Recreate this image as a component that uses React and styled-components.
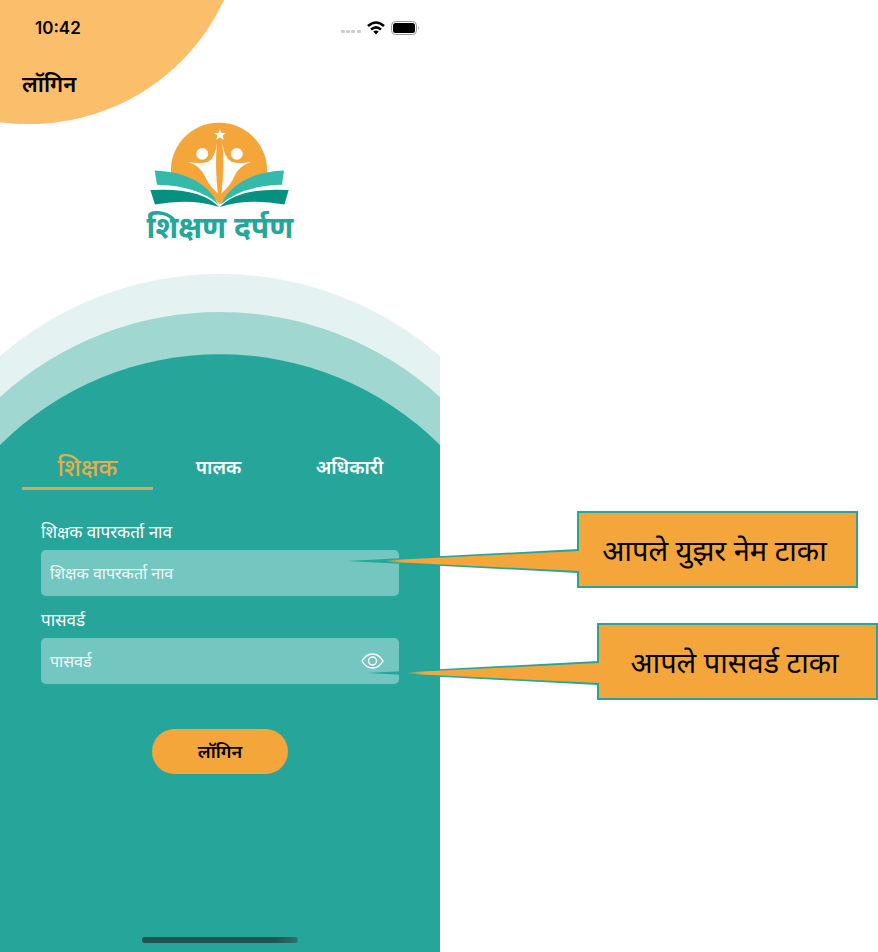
import React, { useState } from "react";
import styled, { createGlobalStyle } from "styled-components";

const teal = "#26a69a";
const orange = "#f4a63a";

const GlobalStyle = createGlobalStyle`
  *, *::before, *::after { box-sizing: border-box; }
  body { margin: 0; background: #fff; }
  body, button, input { font-family: "Noto Sans", "Noto Sans Devanagari", sans-serif; }
`;

const Page = styled.div`
  display: grid;
  grid-template-columns: 440fr 438fr;
  min-height: 100vh;
`;

const Phone = styled.main`
  position: relative;
  display: flex;
  flex-direction: column;
  background: #fff;
`;

const CornerBlob = styled.svg`
  position: absolute;
  top: 0;
  left: 0;
  width: 51%;
  height: auto;
`;

const StatusBar = styled.div`
  position: relative;
  display: flex;
  justify-content: space-between;
  align-items: center;
  height: 56px;
  padding: 0 21px 0 35px;
`;

const Time = styled.time`
  font: 600 17px/24px Inter, sans-serif;
  color: #000;
`;

const StatusIcons = styled.div`
  display: flex;
  align-items: center;
  gap: 6px;
`;

const Title = styled.h1`
  position: relative;
  margin: 0;
  padding: 0 22px;
  font-size: 22px;
  line-height: 54px;
  font-weight: 600;
  color: #000;
`;

const Brand = styled.div`
  display: flex;
  flex-direction: column;
  align-items: center;
  padding-top: 12px;
  height: 164px;
`;

const BrandName = styled.p`
  margin: 0;
  font-size: 30px;
  line-height: 36px;
  font-weight: 700;
  color: ${teal};
  white-space: nowrap;
`;

const Waves = styled.svg`
  display: block;
  width: 100%;
  height: auto;
`;

const Sheet = styled.section`
  flex: 1;
  display: flex;
  flex-direction: column;
  background: ${teal};
`;

const Tabs = styled.div`
  display: grid;
  grid-template-columns: repeat(3, 1fr);
  margin: 0 25px 0 22px;
`;

const Tab = styled.button`
  height: 44px;
  padding: 0;
  border: 0;
  border-bottom: 3px solid ${(p) => (p.$active ? "#d3aa55" : "transparent")};
  background: none;
  color: ${(p) => (p.$active ? "#e8ad48" : "#fff")};
  font-size: ${(p) => (p.$active ? 24 : 19)}px;
  font-weight: ${(p) => (p.$active ? 500 : 600)};
  line-height: 38px;
`;

const Form = styled.form`
  display: flex;
  flex-direction: column;
  padding: 28px 41px 0;
`;

const Label = styled.label`
  font-size: 17px;
  line-height: 28px;
  margin-bottom: 4px;
  color: #fff;
`;

const Field = styled.div`
  display: flex;
  align-items: center;
  height: 46px;
  margin-bottom: 10px;
  padding: 0 15px 0 9px;
  border-radius: 5px;
  background: #74c6c0;
`;

const Input = styled.input`
  flex: 1;
  min-width: 0;
  height: 100%;
  padding: 0;
  border: 0;
  outline: 0;
  background: none;
  color: #fff;
  font-size: 16px;
  &::placeholder { color: #eefaf8; opacity: 1; }
`;

const IconButton = styled.button`
  display: flex;
  padding: 0;
  border: 0;
  background: none;
`;

const Submit = styled.button`
  align-self: center;
  width: 136px;
  height: 45px;
  margin-top: 35px;
  padding: 0 0 2px;
  border: 0;
  border-radius: 23px;
  background: ${orange};
  color: #000;
  font-size: 18px;
  font-weight: 600;
`;

const HomeIndicator = styled.div`
  align-self: center;
  width: 156px;
  height: 6px;
  margin: auto 0 9px;
  border-radius: 3px;
  background: linear-gradient(90deg, #1f544f 85%, #2d756d);
`;

const Notes = styled.aside`
  display: flex;
  flex-direction: column;
  align-items: flex-end;
  gap: 35px;
  padding-top: 511px;
`;

const Callout = styled.p`
  position: relative;
  width: 281px;
  margin: 0 ${(p) => p.$inset}px 0 0;
  padding-right: 6px;
  border: 2px solid ${teal};
  background: ${orange};
  color: #000;
  font-size: 29px;
  line-height: 73px;
  text-align: center;
  white-space: nowrap;
`;

const Pointer = styled.svg`
  position: absolute;
  top: 34px;
  right: 277px;
`;

function Logo() {
  return (
    <svg width="141" height="87" viewBox="30 23 424 260" aria-hidden="true">
      <path fill={orange} d="M94 190A145 145 0 1 1 381 190Q290 210 240 270Q190 210 94 190Z" />
      <g fill="#fff">
        <path d="M240 43l5 12 13 0-10 8 4 13-12-8-11 8 4-13-10-8 13 0z" />
        <circle cx="187" cy="118" r="18" />
        <circle cx="291" cy="118" r="18" />
        <path d="M145 142Q180 151 205 142Q226 130 231 86Q225 160 234 237Q206 212 196 187Q184 157 145 142Z" />
        <path d="M334 142Q299 151 275 142Q253 130 248 86Q254 160 245 237Q273 212 283 187Q295 157 334 142Z" />
      </g>
      <path fill="#35b9aa" d="M44 168Q187 174 236 270Q174 214 51 211Z" />
      <path fill="#35b9aa" d="M433 168Q291 174 243 270Q304 214 427 211Z" />
      <path fill="#069080" d="M31 227Q180 218 238 278Q155 250 45 270Z" />
      <path fill="#069080" d="M447 227Q297 218 240 278Q323 250 434 270Z" />
    </svg>
  );
}

function StatusGlyphs() {
  return (
    <StatusIcons>
      <svg width="20" height="12" viewBox="0 0 20 12" fill="#ccc" aria-hidden="true">
        <rect width="4" height="3" y="8" rx="1" />
        <rect width="4" height="3" x="5" y="8" rx="1" />
        <rect width="4" height="3" x="10" y="8" rx="1" />
        <rect width="4" height="3" x="16" y="8" rx="1" />
      </svg>
      <svg width="18" height="14" viewBox="0 0 18 14" fill="none" stroke="#000" strokeWidth="2.6" aria-hidden="true">
        <path d="M1 5Q9-2 17 5M4 8.6Q9 4.300 14 8.600" />
        <path d="M6.300 10.400Q9 8.400 11.700 10.400L9 13.400Z" fill="#000" stroke="none" />
      </svg>
      <svg width="28" height="14" viewBox="0 0 28 14" aria-hidden="true">
        <rect x=".5" y=".5" width="25" height="13" rx="4" fill="#fff" stroke="#999" />
        <rect x="2" y="2" width="22" height="10" rx="2.500" />
        <path d="M27 5Q28.500 7 27 9Z" fill="#999" />
      </svg>
    </StatusIcons>
  );
}

function EyeIcon() {
  return (
    <svg width="23" height="16" viewBox="0 0 23 16" fill="none" stroke="#fff" strokeWidth="1.400" aria-hidden="true">
      <path d="M1 8Q5 1 11.500 1T22 8Q18 15 11.500 15T1 8Z" />
      <circle cx="11.500" cy="8" r="4" />
    </svg>
  );
}

function CalloutPointer({ id, fadeStart }) {
  return (
    <Pointer width="232" height="28" viewBox="0 0 232 28" aria-hidden="true">
      <defs>
        <linearGradient id={id} gradientUnits="userSpaceOnUse" x1={fadeStart} y1="0" x2={fadeStart + 16} y2="0">
          <stop offset="0" stopColor={teal} />
          <stop offset="1" stopColor={orange} />
        </linearGradient>
      </defs>
      <path d="M0 14L231 2V26Z" fill={teal} />
      <path d="M24 14L232 4V24Z" fill={`url(#${id})`} />
    </Pointer>
  );
}

const roles = ["शिक्षक", "पालक", "अधिकारी"];

export default function App() {
  const [role, setRole] = useState(0);
  const [visible, setVisible] = useState(false);
  return (
    <>
      <GlobalStyle />
      <Page>
        <Phone>
          <CornerBlob viewBox="0 0 224 124" aria-hidden="true">
            <circle cx="29" cy="-91" r="215" fill="#fbbf6b" />
          </CornerBlob>
          <StatusBar>
            <Time>10:42</Time>
            <StatusGlyphs />
          </StatusBar>
          <Title>लॉगिन</Title>
          <Brand>
            <Logo />
            <BrandName>शिक्षण दर्पण</BrandName>
          </Brand>
          <Waves viewBox="0 0 440 172" aria-hidden="true">
            <path d="M0 82A336 336 0 0 1 440 82V172H0Z" fill="#e4f3f2" />
            <path d="M0 123A327 327 0 0 1 440 123V172H0Z" fill="#a0d7d1" />
            <path d="M0 171A312 312 0 0 1 440 171V172H0Z" fill={teal} />
          </Waves>
          <Sheet>
            <Tabs role="tablist">
              {roles.map((name, i) => (
                <Tab key={name} type="button" role="tab" aria-selected={i === role} $active={i === role} onClick={() => setRole(i)}>
                  {name}
                </Tab>
              ))}
            </Tabs>
            <Form onSubmit={(e) => e.preventDefault()}>
              <Label htmlFor="username">शिक्षक वापरकर्ता नाव</Label>
              <Field>
                <Input id="username" placeholder="शिक्षक वापरकर्ता नाव" />
              </Field>
              <Label htmlFor="password">पासवर्ड</Label>
              <Field>
                <Input id="password" type={visible ? "text" : "password"} placeholder="पासवर्ड" />
                <IconButton type="button" aria-label="पासवर्ड दाखवा" onClick={() => setVisible(!visible)}>
                  <EyeIcon />
                </IconButton>
              </Field>
              <Submit type="submit">लॉगिन</Submit>
            </Form>
            <HomeIndicator />
          </Sheet>
        </Phone>
        <Notes>
          <Callout $inset={20}>
            <CalloutPointer id="pointer-username" fadeStart={38} />
            आपले युझर नेम टाका
          </Callout>
          <Callout $inset={0}>
            <CalloutPointer id="pointer-password" fadeStart={40} />
            आपले पासवर्ड टाका
          </Callout>
        </Notes>
      </Page>
    </>
  );
}
